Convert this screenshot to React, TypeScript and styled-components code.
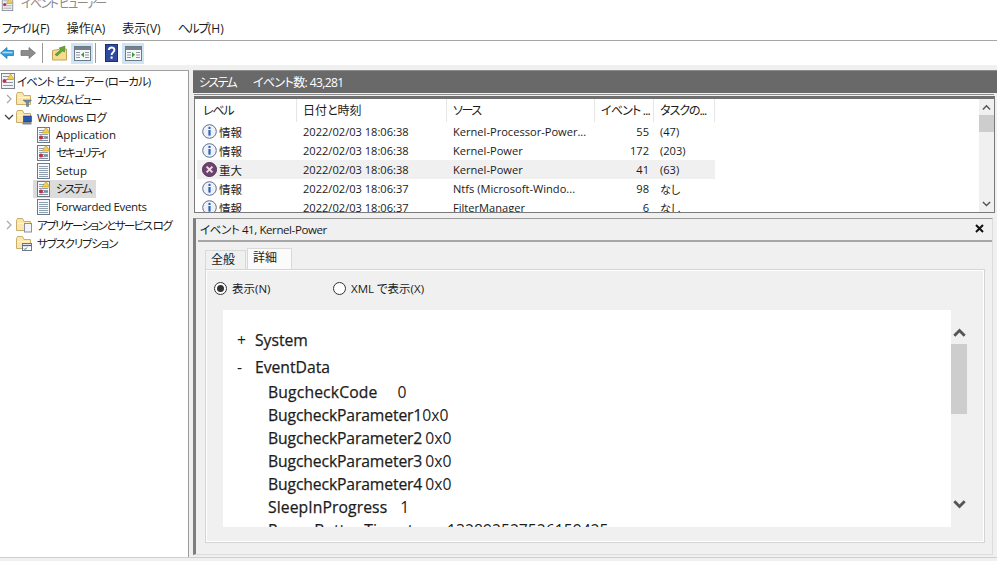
import React from "react";
import styled, { createGlobalStyle } from "styled-components";

const Global = createGlobalStyle`
  html, body { margin: 0; padding: 0; background: #f0f0f0; overflow: hidden; }
  body { font-family: "Open Sans", "Noto Sans CJK JP", sans-serif; color: #1a1a1a; font-feature-settings: "palt"; }
  * { box-sizing: border-box; }
`;
const Page = styled.div`width: 997px; height: 561px; display: flex; flex-direction: column; overflow: hidden; background: #fff;`;
const Jp = styled.span<{ $ls: number }>`letter-spacing: ${(p) => p.$ls}px; white-space: nowrap;`;
const TitleBar = styled.div`height: 11px; flex: none; overflow: hidden; display: flex; align-items: flex-end; gap: 7px; padding-left: 1px; color: #8a8a8a; font-size: 12px; line-height: 16px;`;
const TitleInner = styled(Jp)`margin-bottom: -1px;`;
const MenuBar = styled.div`height: 30px; flex: none; display: flex; align-items: center; padding: 4px 0 0 2px; gap: 17px; font-size: 12px; border-bottom: 1px solid #a6a6a6;`;
const MenuItem = styled.span`white-space: nowrap;`;
const Toolbar = styled.div`height: 24px; flex: none; display: flex; align-items: center;`;
const ToolSep = styled.div<{ $l: number; $r: number }>`width: 1px; height: 20px; background: #9a9a9a; margin: 0 ${(p) => p.$r}px 0 ${(p) => p.$l}px;`;
const ToolBtn = styled.div<{ $on?: boolean; $w: number; $l?: number }>`
  width: ${(p) => p.$w}px; height: 21px; display: flex; align-items: center; justify-content: center; flex: none; margin-left: ${(p) => p.$l ?? 0}px;
  background: ${(p) => (p.$on ? "#cfe4f5" : "transparent")};
`;
const Main = styled.div`flex: 1; min-height: 0; display: flex; background: #f0f0f0; padding-top: 5px; border-bottom: 1px solid #cfcfcf;`;
const BottomStrip = styled.div`height: 3px; flex: none; background: #f0f0f0;`;
const Nav = styled.div`width: 189px; flex: none; background: #fff; border-right: 1px solid #9c9c9c; border-top: 1px solid #a0a0a0; padding-top: 1px; display: flex; flex-direction: column;`;
const TreeRow = styled.div<{ $indent: number }>`height: 18px; display: flex; align-items: center; padding-left: ${(p) => p.$indent}px; font-size: 11.5px; white-space: nowrap; flex: none;`;
const Caret = styled.span`width: 15px; height: 16px; flex: none; display: flex; align-items: center; justify-content: center;`;
const TreeIcon = styled.span`width: 16px; height: 16px; flex: none; margin-right: 5px; display: flex;`;
const LeafIcon = styled(TreeIcon)`margin-right: 4px;`;
const LeafLabel = styled(Jp)`padding-bottom: 2px;`;
const TreeItem = styled.span<{ $sel?: boolean }>`height: 18px; display: flex; align-items: center; padding: 0 5px 0 3px; background: ${(p) => (p.$sel ? "#dcdcdc" : "transparent")};`;
const RootIcon = styled(TreeIcon)`margin-right: 1px;`;
const Right = styled.div`flex: 1; min-width: 0; margin-left: 4px; display: flex; flex-direction: column;`;
const Header = styled.div`height: 23px; flex: none; background: #696969; color: #fff; display: flex; align-items: center; gap: 17px; font-size: 12px; padding-left: 6px; border-top: 1px solid #8c8c8c;`;
const ThinRule = styled.div`height: 1px; flex: none; margin: 1px 3px 1px 1px; background: #8c8c8c;`;
const ListFrame = styled.div`height: 117px; width: 801px; flex: none; margin-left: 1px; background: #fff; border: 1px solid #7a7a7a; border-top: 3px solid #6f6f6f; display: flex; overflow: hidden;`;
const ListBody = styled.div`flex: 1; min-width: 0; overflow: hidden; padding-left: 2px;`;
const ListHead = styled.div`display: flex; height: 23px; font-size: 12px; width: 518px;`;
const HeadCell = styled.div<{ $w: number }>`width: ${(p) => p.$w}px; flex: none; padding-left: 6px; line-height: 24px; border-right: 1px solid #e6e6e6; white-space: nowrap; overflow: hidden;`;
const ListRow = styled.div<{ $hl?: boolean }>`display: flex; height: 19px; width: 518px; font-size: 11.1px; align-items: center; background: ${(p) => (p.$hl ? "#f0f0f0" : "transparent")};`;
const LevelCell = styled.div`width: 100px; flex: none; display: flex; align-items: center; gap: 2px; padding-left: 5px; font-size: 11.5px;`;
const TextCell = styled.div<{ $w: number; $right?: boolean }>`
  width: ${(p) => p.$w}px; flex: none; white-space: nowrap; overflow: hidden; text-overflow: ellipsis;
  padding: 0 ${(p) => (p.$right ? 5 : 2)}px 0 ${(p) => (p.$right ? 0 : 6)}px; text-align: ${(p) => (p.$right ? "right" : "left")};
`;
const VBar = styled.div<{ $w: number }>`width: ${(p) => p.$w}px; flex: none; display: flex; flex-direction: column; background: #f0f0f0; align-items: center;`;
const ArrowBox = styled.div<{ $h: number; $pt?: number }>`height: ${(p) => p.$h}px; padding-top: ${(p) => p.$pt ?? 0}px; flex: none; display: flex; align-items: center; justify-content: center;`;
const Thumb = styled.div<{ $h: number }>`width: 100%; height: ${(p) => p.$h}px; flex: none; background: #cdcdcd;`;
const Spacer = styled.div`flex: 1;`;
const Detail = styled.div`flex: none; height: 337px; margin: 5px 4px 0 0; border-top: 1px solid #9a9a9a; border-left: 3px solid #7e7e7e; border-right: 1px solid #dcdcdc; border-bottom: 1px solid #dcdcdc; padding: 0 0 0 2px; display: flex; flex-direction: column;`;
const DetailHead = styled.div`height: 23px; flex: none; border-bottom: 2px solid #a6a6a6; display: flex; align-items: center; justify-content: space-between; padding: 0 8px 2px 2px; font-size: 11.5px;`;
const Tabs = styled.div`height: 27px; flex: none; display: flex; align-items: flex-end; padding-left: 7px; font-size: 12px;`;
const Tab = styled.div<{ $active?: boolean }>`
  height: ${(p) => (p.$active ? 21 : 19)}px; padding: 0 5px; line-height: 18px; margin-left: ${(p) => (p.$active ? 1 : 0)}px;
  background: ${(p) => (p.$active ? "#fbfbfb" : "#f0f0f0")};
  border: 1px solid #d9d9d9; border-bottom: none; width: ${(p) => (p.$active ? 45 : 41)}px;
`;
const TabPanel = styled.div`width: 780px; height: 274px; flex: none; margin-left: 7px; border: 1px solid #d4d4d4; box-shadow: inset 0 0 0 1px #fff; padding: 0 0 0 8px; display: flex; flex-direction: column;`;
const RadioRow = styled.div`height: 40px; flex: none; display: flex; align-items: center; font-size: 11.5px; padding-bottom: 4px;`;
const Radio = styled.span<{ $on?: boolean }>`
  width: 13px; height: 13px; flex: none; border-radius: 50%; border: 1px solid #333; background: #fff; display: flex; align-items: center; justify-content: center; margin-right: 5px;
  &::after { content: ""; width: 7px; height: 7px; border-radius: 50%; background: ${(p) => (p.$on ? "#333" : "transparent")}; }
`;
const RadioGroup = styled.label<{ $w: number }>`display: flex; align-items: center; width: ${(p) => p.$w}px; flex: none;`;
const ViewerWrap = styled.div`display: flex; height: 217px; flex: none; margin-left: 9px;`;
const Viewer = styled.div`width: 728px; flex: none; background: #fff; overflow: hidden; padding-top: 19px; font-size: 15.7px; color: #1c1c1c;`;
const Section = styled.div<{ $h: number }>`height: ${(p) => p.$h}px; line-height: 23px; display: flex; -webkit-text-stroke: 0.25px #1c1c1c;`;
const Sign = styled.span`width: 32px; padding-left: 14px; flex: none; -webkit-text-stroke: 0;`;
const DataRow = styled.div`height: 23px; line-height: 23px; display: flex; padding-left: 45px; white-space: nowrap;`;
const DataName = styled.span<{ $ls: number }>`flex: none; letter-spacing: ${(p) => p.$ls}px; -webkit-text-stroke: 0.25px #1c1c1c;`;
const DataValue = styled.span<{ $gap: number }>`margin-left: ${(p) => p.$gap}px; flex: none;`;
const Close = styled.span`display: flex;`;

const Chev = ({ dir, w = 10, sw = 2, color = "#555" }: { dir: "up" | "down"; w?: number; sw?: number; color?: string }) => (
  <svg width={w} height={w * 0.7} viewBox="0 0 10 7" fill="none">
    <path d={dir === "up" ? "M1 6 L5 2 L9 6" : "M1 1 L5 5 L9 1"} stroke={color} strokeWidth={sw} />
  </svg>
);
const LogIcon = ({ warn }: { warn?: boolean }) => (
  <svg width="16" height="16" viewBox="0 0 16 16">
    <rect x="1.5" y="0.5" width="12" height="15" fill="#f6f8fb" stroke="#6a7a8a" />
    {[3, 5, 7, 9, 11, 13].map((y) => <path key={y} d={`M3 ${y}.5H12`} stroke="#8fa0b0" />)}
    {warn && <path d="M10 0.5 L14 6 H6 Z" fill="#f4cf4e" stroke="#b8902a" strokeWidth=".6" />}
    {warn && <circle cx="5" cy="10.5" r="2" fill="#c03048" />}
    {warn && <path d="M8 10.5H12M3 13.5H12" stroke="#7f8fa0" />}
  </svg>
);
const Folder = ({ badge }: { badge?: "filter" | "pc" | "none" | "sub" }) => (
  <svg width="16" height="16" viewBox="0 0 16 16">
    <path d="M0.5 3.5 V13.5 H14.5 V4.5 H8 L6.5 1.5 H1.5 Z" fill="#fbe7ad" stroke="#c9ae6a" />
    <path d="M1.5 6.5H13.5" stroke="#fff6d8" />
    {badge === "filter" && <path d="M7 9 H15.5 L12.5 12 V15.5 H10.5 V12 Z" fill="#6f8ca6" stroke="#4c6478" strokeWidth=".5" />}
    {badge === "pc" && <><rect x="7.5" y="7" width="8" height="6" fill="#2a56b0" stroke="#1f3a78" strokeWidth=".6" /><rect x="6.5" y="13.5" width="9" height="2" fill="#7a86a0" /></>}
    {badge === "none" && <rect x="8.5" y="6.5" width="7" height="8.5" fill="#f4f4f8" stroke="#8b8fa4" />}
    {badge === "sub" && <><rect x="6.5" y="8.5" width="9" height="7" fill="#fff" stroke="#6d7a8e" /><path d="M6.5 10.5H15.5" stroke="#3a6cb8" strokeWidth="1.4" /><path d="M8 13.5l1 1 2-2" stroke="#2e6a3c" fill="none" /></>}
  </svg>
);
const ViewerIcon = ({ size = 16 }: { size?: number }) => (
  <svg width={size} height={size} viewBox="0 0 16 16">
    <rect x="1.5" y="0.5" width="13" height="15" fill="#f3f3f6" stroke="#7d8290" />
    <path d="M3 3.5H12M6 6.5H13M6 9.5H13M3 12.5H13" stroke="#8c97a6" />
    <path d="M10.5 1 L14.5 6.5 H7 Z" fill="#f4cf4e" stroke="#b8902a" strokeWidth=".5" />
    <circle cx="4.5" cy="8" r="2" fill="#b9324d" />
  </svg>
);
const BackArrow = () => (
  <svg width="14" height="14" viewBox="0 0 14 14"><path d="M7 1.5 L0.5 7 L7 12.5 V9.5 H13.5 V4.5 H7 Z" fill="#2d9fe0" stroke="#1a6ea8" strokeWidth=".7" /><path d="M2.5 6.5H12.5" stroke="#a4dcfa" strokeWidth="1.6" /></svg>
);
const FwdArrow = () => (
  <svg width="16" height="14" viewBox="0 0 16 14"><path d="M9 1.5 L15.5 7 L9 12.5 V9.5 H1 V4.5 H9 Z" fill="#8c8c8c" stroke="#6f6f6f" strokeWidth=".7" /></svg>
);
const UpFolder = () => (
  <svg width="15" height="16" viewBox="0 0 15 16"><path d="M0.5 5.5 V15 H14.5 V4 H9 Z" fill="#f6dc8e" stroke="#c2a458" /><path d="M3 9.5 L9 4.5 L7 3 L13 1 L12.5 7 L10.5 6 L5 11 Z" fill="#5fa834" stroke="#3d7a20" strokeWidth=".5" /></svg>
);
const PaneIcon = ({ side }: { side: "left" | "right" }) => (
  <svg width="17" height="15" viewBox="0 0 17 15">
    <rect x="0.5" y="0.5" width="16" height="14" fill="#f7f8f9" stroke="#6e7a86" />
    <rect x="1" y="1" width="15" height="3" fill="#77808a" />
    <path d="M2 6.5H6M2 9H6M2 11.5H6M11 6.5H15M11 9H15M11 11.5H15" stroke="#8b96a2" />
    <path d={side === "left" ? "M10 6 L7 8.8 L10 11.5 Z" : "M7 6 L10 8.8 L7 11.5 Z"} fill="#3d9b3a" />
  </svg>
);
const HelpIcon = () => (
  <svg width="13" height="18" viewBox="0 0 13 18"><rect width="13" height="18" fill="#2f4aa0" /><rect x="0.5" y="0.5" width="12" height="17" fill="none" stroke="#1c2f74" /><path d="M3.8 6 C3.8 2.6 9.4 2.6 9.4 6 C9.4 8.4 6.6 8.4 6.6 11" stroke="#fff" strokeWidth="1.9" fill="none" /><rect x="5.6" y="12.5" width="2" height="2.2" fill="#fff" /></svg>
);
const InfoIcon = () => (
  <svg width="15" height="15" viewBox="0 0 15 15">
    <circle cx="7.5" cy="7.5" r="6.8" fill="#eef2f8" stroke="#5d6f92" />
    <circle cx="7.5" cy="3.9" r="1.2" fill="#2b63b8" />
    <rect x="6.4" y="6" width="2.2" height="5.6" fill="#2b63b8" />
  </svg>
);
const CritIcon = () => (
  <svg width="15" height="15" viewBox="0 0 15 15">
    <circle cx="7.5" cy="7.5" r="7" fill="#6d4470" stroke="#4f3152" />
    <path d="M4.6 4.6 L10.4 10.4 M10.4 4.6 L4.6 10.4" stroke="#f4dbe2" strokeWidth="2" />
  </svg>
);
const CaretRight = () => <svg width="8" height="10" viewBox="0 0 8 10" fill="none"><path d="M2 1 L6 5 L2 9" stroke="#a8a8a8" strokeWidth="1.2" /></svg>;
const CaretDown = () => <svg width="10" height="8" viewBox="0 0 10 8" fill="none"><path d="M1 2 L5 6 L9 2" stroke="#444" strokeWidth="1.3" /></svg>;
const CloseX = () => <svg width="9" height="9" viewBox="0 0 9 9"><path d="M1 1 L8 8 M8 1 L1 8" stroke="#111" strokeWidth="2" /></svg>;

const rows = [
  { lv: "情報", crit: false, d: "2022/02/03 18:06:38", s: "Kernel-Processor-Power...", id: "55", t: "(47)" },
  { lv: "情報", crit: false, d: "2022/02/03 18:06:38", s: "Kernel-Power", id: "172", t: "(203)" },
  { lv: "重大", crit: true, d: "2022/02/03 18:06:38", s: "Kernel-Power", id: "41", t: "(63)" },
  { lv: "情報", crit: false, d: "2022/02/03 18:06:37", s: "Ntfs (Microsoft-Windo...", id: "98", t: "なし" },
  { lv: "情報", crit: false, d: "2022/02/03 18:06:37", s: "FilterManager", id: "6", t: "なし" },
];
const data: [string, string, number, number][] = [
  ["BugcheckCode", "0", 20, 0.15],
  ["BugcheckParameter1", "0x0", 0, -0.12],
  ["BugcheckParameter2", "0x0", 3, -0.12],
  ["BugcheckParameter3", "0x0", 3, -0.12],
  ["BugcheckParameter4", "0x0", 3, -0.12],
  ["SleepInProgress", "1", 13, 0.1],
  ["PowerButtonTimestamp", "132892527526159425", 1, 0],
];
const menus: [string, string, number][] = [
  ["ファイル", "(F)", -1.8],
  ["操作", "(A)", 0],
  ["表示", "(V)", 0],
  ["ヘルプ", "(H)", -1.4],
];
const Leaf = ({ label, ls, warn, sel }: { label: string; ls: number; warn?: boolean; sel?: boolean }) => (
  <TreeRow $indent={33}><TreeItem $sel={sel}><LeafIcon><LogIcon warn={warn} /></LeafIcon><LeafLabel $ls={ls}>{label}</LeafLabel></TreeItem></TreeRow>
);

export default function App() {
  return (
    <Page>
      <Global />
      <TitleBar><ViewerIcon size={13} /><TitleInner $ls={-1.6}>イベント ビューアー</TitleInner></TitleBar>
      <MenuBar>
        {menus.map(([a, b, ls]) => <MenuItem key={a}><Jp $ls={ls}>{a}</Jp>{b}</MenuItem>)}
      </MenuBar>
      <Toolbar>
        <ToolBtn $w={14}><BackArrow /></ToolBtn>
        <ToolBtn $w={28}><FwdArrow /></ToolBtn>
        <ToolSep $l={0} $r={7} />
        <ToolBtn $w={18}><UpFolder /></ToolBtn>
        <ToolBtn $on $w={22} $l={3}><PaneIcon side="left" /></ToolBtn>
        <ToolSep $l={2} $r={7} />
        <ToolBtn $w={16}><HelpIcon /></ToolBtn>
        <ToolBtn $on $w={22} $l={3}><PaneIcon side="right" /></ToolBtn>
      </Toolbar>
      <Main>
        <Nav>
          <TreeRow $indent={0}><RootIcon><ViewerIcon /></RootIcon><Jp $ls={-1}>イベント ビューアー (ローカル)</Jp></TreeRow>
          <TreeRow $indent={1}><Caret><CaretRight /></Caret><TreeIcon><Folder badge="filter" /></TreeIcon><Jp $ls={-1.6}>カスタム ビュー</Jp></TreeRow>
          <TreeRow $indent={1}><Caret><CaretDown /></Caret><TreeIcon><Folder badge="pc" /></TreeIcon><Jp $ls={-0.4}>Windows ログ</Jp></TreeRow>
          <Leaf label="Application" ls={0} warn />
          <Leaf label="セキュリティ" ls={-1.7} warn />
          <Leaf label="Setup" ls={0} />
          <Leaf label="システム" ls={-1.7} warn sel />
          <Leaf label="Forwarded Events" ls={-0.35} />
          <TreeRow $indent={1}><Caret><CaretRight /></Caret><TreeIcon><Folder badge="none" /></TreeIcon><Jp $ls={-1.6}>アプリケーションとサービス ログ</Jp></TreeRow>
          <TreeRow $indent={1}><Caret /><TreeIcon><Folder badge="sub" /></TreeIcon><Jp $ls={-1.2}>サブスクリプション</Jp></TreeRow>
        </Nav>
        <Right>
          <Header><Jp $ls={-1.7}>システム</Jp><Jp $ls={-0.6}>イベント数: 43,281</Jp></Header>
          <ThinRule />
          <ListFrame>
            <ListBody>
              <ListHead>
                <HeadCell $w={100}><Jp $ls={-1.2}>レベル</Jp></HeadCell>
                <HeadCell $w={150}>日付と時刻</HeadCell>
                <HeadCell $w={148}><Jp $ls={-1.4}>ソース</Jp></HeadCell>
                <HeadCell $w={59}><Jp $ls={-0.8}>イベント ...</Jp></HeadCell>
                <HeadCell $w={61}><Jp $ls={-1}>タスクの...</Jp></HeadCell>
              </ListHead>
              {rows.map((r, i) => (
                <ListRow key={i} $hl={r.crit}>
                  <LevelCell>{r.crit ? <CritIcon /> : <InfoIcon />}<span>{r.lv}</span></LevelCell>
                  <TextCell $w={150}>{r.d}</TextCell>
                  <TextCell $w={148}>{r.s}</TextCell>
                  <TextCell $w={59} $right>{r.id}</TextCell>
                  <TextCell $w={61}>{r.t}</TextCell>
                </ListRow>
              ))}
            </ListBody>
            <VBar $w={15}>
              <ArrowBox $h={16}><Chev dir="up" w={9} sw={1.6} /></ArrowBox>
              <Thumb $h={17} />
              <Spacer />
              <ArrowBox $h={16}><Chev dir="down" w={9} sw={1.6} /></ArrowBox>
            </VBar>
          </ListFrame>
          <Detail>
            <DetailHead><Jp $ls={-0.4}>イベント 41, Kernel-Power</Jp><Close><CloseX /></Close></DetailHead>
            <Tabs><Tab>全般</Tab><Tab $active>詳細</Tab></Tabs>
            <TabPanel>
              <RadioRow>
                <RadioGroup $w={119}><Radio $on />表示(N)</RadioGroup>
                <RadioGroup $w={200}><Radio />XML で表示(X)</RadioGroup>
              </RadioRow>
              <ViewerWrap>
                <Viewer>
                  <Section $h={27}><Sign>+</Sign>System</Section>
                  <Section $h={25}><Sign>-</Sign>EventData</Section>
                  {data.map(([n, v, g, ls]) => <DataRow key={n}><DataName $ls={ls}>{n}</DataName><DataValue $gap={g}>{v}</DataValue></DataRow>)}
                </Viewer>
                <VBar $w={16}>
                  <ArrowBox $h={34} $pt={11}><Chev dir="up" w={13} sw={2.2} /></ArrowBox>
                  <Thumb $h={70} />
                  <Spacer />
                  <ArrowBox $h={44}><Chev dir="down" w={13} sw={2.2} /></ArrowBox>
                </VBar>
              </ViewerWrap>
            </TabPanel>
          </Detail>
        </Right>
      </Main>
      <BottomStrip />
    </Page>
  );
}
